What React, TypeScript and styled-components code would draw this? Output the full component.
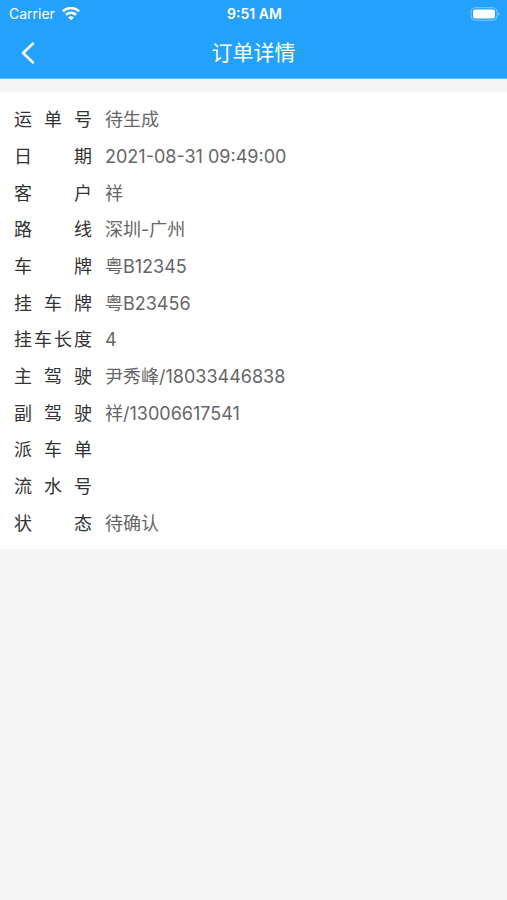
import React from "react";
import styled, { createGlobalStyle } from "styled-components";

const GlobalStyle = createGlobalStyle`
  * { box-sizing: border-box; }
  body {
    margin: 0;
    background: #f5f5f5;
    font-family: Inter, "Noto Sans CJK SC", sans-serif;
  }
`;

const Page = styled.div`
  min-height: 100vh;
  background: #f5f5f5;
`;

const Header = styled.header`
  background: #24a1fb;
  border-bottom: 1px solid #5fbafb;
  color: #fff;
`;

const StatusBar = styled.div`
  display: grid;
  grid-template-columns: 1fr auto 1fr;
  align-items: center;
  height: 27px;
  padding: 0 7px 0 9px;
  font-size: 14px;
  line-height: 20px;
`;

const Carrier = styled.div`
  display: flex;
  align-items: center;
  gap: 7px;
`;

const Clock = styled.time`
  font-size: 14px;
  font-weight: 600;
`;

const BatteryIcon = styled.svg`
  justify-self: end;
`;

const NavBar = styled.div`
  display: grid;
  grid-template-columns: 56px 1fr 56px;
  align-items: center;
  height: 51px;
`;

const BackButton = styled.button`
  display: flex;
  align-items: center;
  height: 51px;
  padding: 0 20px;
  border: 0;
  background: none;
  color: inherit;
`;

const Title = styled.h1`
  margin: 0;
  font-size: 21px;
  font-weight: 400;
  line-height: 32px;
  text-align: center;
`;

const Card = styled.main`
  margin-top: 13px;
  padding: 10px 14px 7px;
  background: #fff;
`;

const Details = styled.dl`
  display: grid;
  grid-auto-rows: 1fr;
  min-height: 440px;
  margin: 0;
`;

const Row = styled.div`
  display: grid;
  grid-template-columns: 78px 1fr;
  column-gap: 13px;
  align-items: center;
  font-size: 18px;
  line-height: 36px;
`;

const Label = styled.dt`
  display: flex;
  justify-content: space-between;
  color: #333;
`;

const Value = styled.dd`
  margin: 0;
  color: #666;
`;

const details: [string, string][] = [
  ["运单号", "待生成"],
  ["日期", "2021-08-31 09:49:00"],
  ["客户", "祥"],
  ["路线", "深圳-广州"],
  ["车牌", "粤B12345"],
  ["挂车牌", "粤B23456"],
  ["挂车长度", "4"],
  ["主驾驶", "尹秀峰/18033446838"],
  ["副驾驶", "祥/13006617541"],
  ["派车单", ""],
  ["流水号", ""],
  ["状态", "待确认"],
];

export default function App() {
  return (
    <Page>
      <GlobalStyle />
      <Header>
        <StatusBar>
          <Carrier>
            Carrier
            <svg width="18" height="14" viewBox="0 0 18 14" fill="none" stroke="#fff" strokeWidth="2.6" aria-hidden="true">
              <path d="M0.9 4.4a11.5 11.5 0 0 1 16.2 0M4 7.8a7.1 7.1 0 0 1 10 0" />
              <path d="M9 13.3 6.2 10.5a4 4 0 0 1 5.6 0Z" fill="#fff" stroke="none" />
            </svg>
          </Carrier>
          <Clock>9:51 AM</Clock>
          <BatteryIcon width="30" height="14" viewBox="0 0 30 14" aria-hidden="true">
            <rect x="1" y="0.7" width="26" height="12.6" rx="4" fill="none" stroke="#fff" strokeOpacity="0.4" />
            <rect x="3" y="2.5" width="22" height="9" rx="2" fill="#fff" />
            <path d="M28.2 5a2.4 2.4 0 0 1 0 4Z" fill="#fff" fillOpacity="0.5" />
          </BatteryIcon>
        </StatusBar>
        <NavBar>
          <BackButton type="button" aria-label="返回">
            <svg width="15" height="24" viewBox="0 0 15 24" fill="none" stroke="#fff" strokeWidth="2.5" strokeLinecap="round" strokeLinejoin="round" aria-hidden="true">
              <path d="M13 2.5 3 12l10 9.5" />
            </svg>
          </BackButton>
          <Title>订单详情</Title>
        </NavBar>
      </Header>
      <Card>
        <Details>
          {details.map(([label, value]) => (
            <Row key={label}>
              <Label>
                {[...label].map((character) => (
                  <span key={character}>{character}</span>
                ))}
              </Label>
              <Value>{value}</Value>
            </Row>
          ))}
        </Details>
      </Card>
    </Page>
  );
}
